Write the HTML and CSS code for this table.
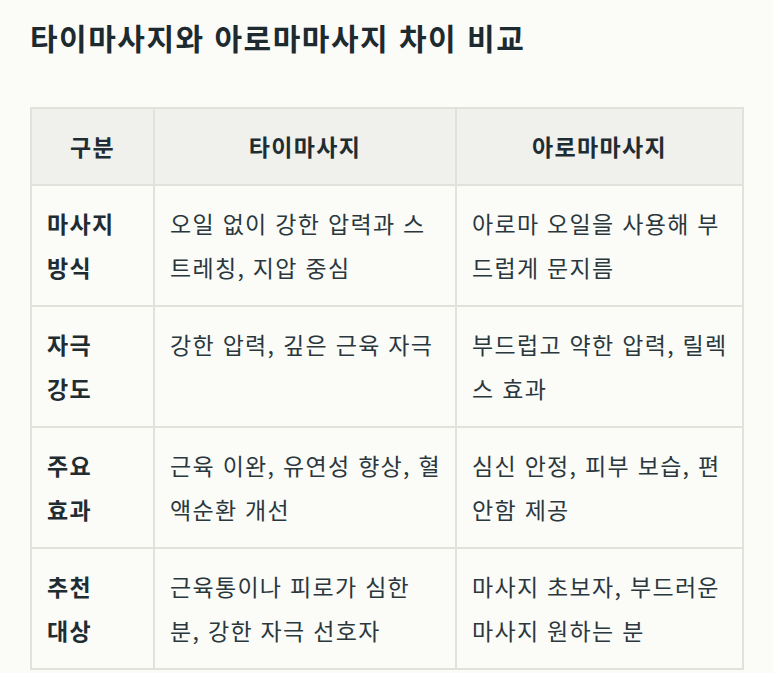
FILE: index.html
```html
<!DOCTYPE html>
<html lang="ko">
<head>
<meta charset="utf-8">
<link rel="stylesheet" href="styles.css">
</head>
<body>
<main class="page">
  <h2 class="title">타이마사지와 아로마마사지 차이 비교</h2>
  <table class="compare">
    <colgroup>
      <col class="c1"><col class="c2"><col class="c3">
    </colgroup>
    <thead>
      <tr><th>구분</th><th>타이마사지</th><th>아로마마사지</th></tr>
    </thead>
    <tbody>
      <tr><td class="label">마사지<br>방식</td><td>오일 없이 강한 압력과 스트레칭, 지압 중심</td><td>아로마 오일을 사용해 부드럽게 문지름</td></tr>
      <tr><td class="label">자극<br>강도</td><td>강한 압력, 깊은 근육 자극</td><td>부드럽고 약한 압력, 릴렉스 효과</td></tr>
      <tr><td class="label">주요<br>효과</td><td>근육 이완, 유연성 향상, 혈액순환 개선</td><td>심신 안정, 피부 보습, 편안함 제공</td></tr>
      <tr><td class="label">추천<br>대상</td><td>근육통이나 피로가 심한 분, 강한 자극 선호자</td><td>마사지 초보자, 부드러운 마사지 원하는 분</td></tr>
    </tbody>
  </table>
</main>
</body>
</html>
```
FILE: styles.css
```css
html, body {
  margin: 0;
  padding: 0;
  background: #fbfbf8;
}
body {
  font-family: "Noto Sans CJK KR", "Noto Sans", sans-serif;
  color: #2a383e;
}
.page {
  padding: 13px 31px 0 30px;
}
.title {
  margin: 0 0 46px 0;
  font-size: 30px;
  line-height: 48px;
  font-weight: 600;
  color: #1d2b30;
  letter-spacing: 1.5px;
}
.compare {
  width: 712px;
  border-collapse: collapse;
  table-layout: fixed;
  font-size: 23px;
  line-height: 44px;
  letter-spacing: 1.3px;
  border: 2px solid #e2e1dc;
}
.c1 { width: 123px; }
.c2 { width: 302px; }
.c3 { width: 287px; }
.compare th,
.compare td {
  border: 2px solid #e2e1dc;
  vertical-align: top;
}
.compare th {
  background: #f0f0ed;
  font-weight: 600;
  text-align: center;
  padding: 15px 14px 16px;
  color: #1f2d33;
}
.compare td {
  padding: 15px 14px 16px 15px;
  height: 88px;
}
.compare td.label {
  font-weight: 700;
  color: #1f2d33;
}
```
